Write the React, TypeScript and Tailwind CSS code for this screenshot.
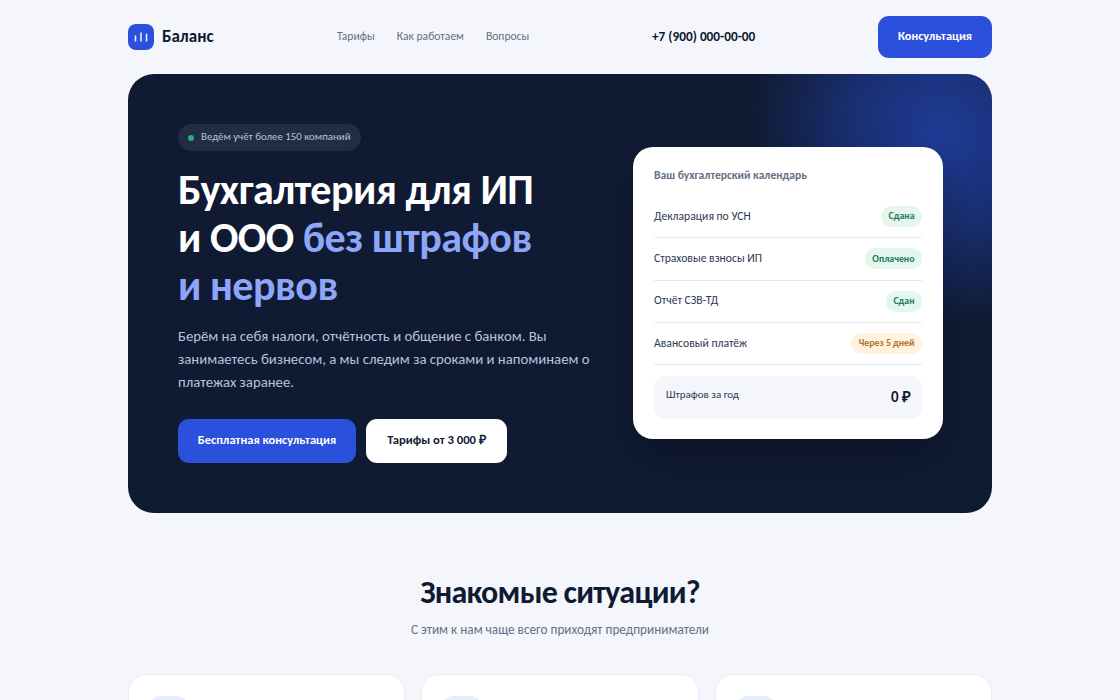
import React from 'react';

const rows = [
  { name: 'Декларация по УСН', status: 'Сдана', warn: false },
  { name: 'Страховые взносы ИП', status: 'Оплачено', warn: false },
  { name: 'Отчёт СЗВ-ТД', status: 'Сдан', warn: false },
  { name: 'Авансовый платёж', status: 'Через 5 дней', warn: true },
];

const Logo = () => (
  <div className="w-[26px] h-[26px] rounded-lg bg-[#2a50dc] flex items-center justify-center">
    <svg width="14" height="10" viewBox="0 0 14 10" fill="none" stroke="#f2f5ff" strokeWidth="1.5">
      <path d="M1.5 3.5V9.5M7 .5V9.5M12.5 1.8V9.5" />
    </svg>
  </div>
);

export default function App() {
  return (
    <div className="h-screen overflow-hidden bg-[#f4f6fc] font-['Carlito','Lato',sans-serif] text-[#0f1a33]">
      <div className="w-[864px] mx-auto">
        <header className="h-[74px] pb-px flex items-center">
          <div className="w-[209px] flex items-center gap-2">
            <Logo />
            <span className="text-[17px] font-bold">Баланс</span>
          </div>
          <nav className="w-[315px] flex items-center gap-[22px] text-[11.6px] text-[#667085]">
            <a>Тарифы</a>
            <a>Как работаем</a>
            <a>Вопросы</a>
          </nav>
          <span className="w-[226px] text-[13.3px] font-bold">+7 (900) 000-00-00</span>
          <button className="w-[114px] h-[42px] rounded-[11px] bg-[#2a50dc] text-white text-[12.4px] font-bold">Консультация</button>
        </header>

        <section className="relative overflow-hidden h-[439px] rounded-[26px] bg-[#101b33] pl-[50px] pr-[49px] pt-[50px] flex justify-between">
          <div className="absolute top-[-130px] right-[-140px] w-[385px] h-[385px] rounded-full bg-[radial-gradient(circle,rgba(43,85,230,0.56)_0%,rgba(43,85,230,0.36)_32%,rgba(43,85,230,0)_70%)]" />
          <div className="relative w-[420px]">
            <div className="flex w-fit items-center gap-[7px] h-[27px] px-[10px] rounded-full bg-white/[0.08] text-[10.85px] text-[#b8c2da]">
              <span className="w-[6px] h-[6px] rounded-full bg-[#22b07d]" />
              Ведём учёт более 150 компаний
            </div>
            <h1 className="mt-[15px] text-[42px] leading-[48px] tracking-[-0.48px] font-bold text-white whitespace-nowrap">
              Бухгалтерия для ИП
              <br />
              и ООО <span className="text-[#8ea6fa]">без штрафов</span>
              <br />
              <span className="text-[#8ea6fa]">и нервов</span>
            </h1>
            <p className="mt-[15px] text-[14.75px] leading-[23px] text-[#b8c2da] whitespace-nowrap">
              Берём на себя налоги, отчётность и общение с банком. Вы
              <br />
              занимаетесь бизнесом, а мы следим за сроками и напоминаем о
              <br />
              платежах заранее.
            </p>
            <div className="mt-[25px] flex gap-[10px]">
              <button className="w-[178px] h-[44px] pb-px rounded-[11px] bg-[#2a50dc] text-white text-[12.5px] font-bold">Бесплатная консультация</button>
              <button className="w-[141px] h-[44px] pb-px rounded-[11px] bg-white text-[#0f1a33] text-[12.6px] font-bold">Тарифы от 3 000 ₽</button>
            </div>
          </div>

          <div className="relative mt-[23px] w-[310px] h-[292px] rounded-[20px] bg-white px-[21px] pt-[20px] shadow-[0_20px_50px_rgba(0,0,0,0.25)]">
            <div className="text-[11.6px] font-bold text-[#667085] leading-[17px]">Ваш бухгалтерский календарь</div>
            <div className="mt-[12px]">
              {rows.map((r) => (
                <div key={r.name} className="h-[42.25px] flex items-center justify-between border-b border-[#e6e9f0] text-[11.65px] text-[#2f3a52]">
                  <span>{r.name}</span>
                  <span className={r.warn ? 'h-[21px] px-[7.5px] rounded-full bg-[#fff3e0] text-[#b0741c] text-[9.8px] font-bold flex items-center' : 'h-[21px] px-[7.5px] rounded-full bg-[#e5f6ef] text-[#1d7a58] text-[9.8px] font-bold flex items-center'}>
                    {r.status}
                  </span>
                </div>
              ))}
            </div>
            <div className="mt-[11px] h-[43px] rounded-[12px] bg-[#f4f6fc] pl-[12px] pr-[11px] flex items-center justify-between">
              <span className="text-[11px] text-[#2f3a52] -mt-[5px]">Штрафов за год</span>
              <span className="text-[15px] font-bold">0 ₽</span>
            </div>
          </div>
        </section>

        <section className="pt-[61px]">
          <h2 className="text-center text-[32px] leading-[38px] tracking-[-0.75px] font-bold">Знакомые ситуации?</h2>
          <p className="mt-[8px] text-center text-[13.25px] leading-[20px] text-[#667085]">С этим к нам чаще всего приходят предприниматели</p>
          <div className="mt-[34px] grid grid-cols-3 gap-[16px]">
            {[0, 1, 2].map((i) => (
              <div key={i} className="h-[180px] rounded-[18px] bg-white border border-[#e9ecf6] pt-[21px] pl-[21px]">
                <div className="w-[38px] h-[38px] rounded-[10px] bg-[#e8edfd]" />
              </div>
            ))}
          </div>
        </section>
      </div>
    </div>
  );
}
